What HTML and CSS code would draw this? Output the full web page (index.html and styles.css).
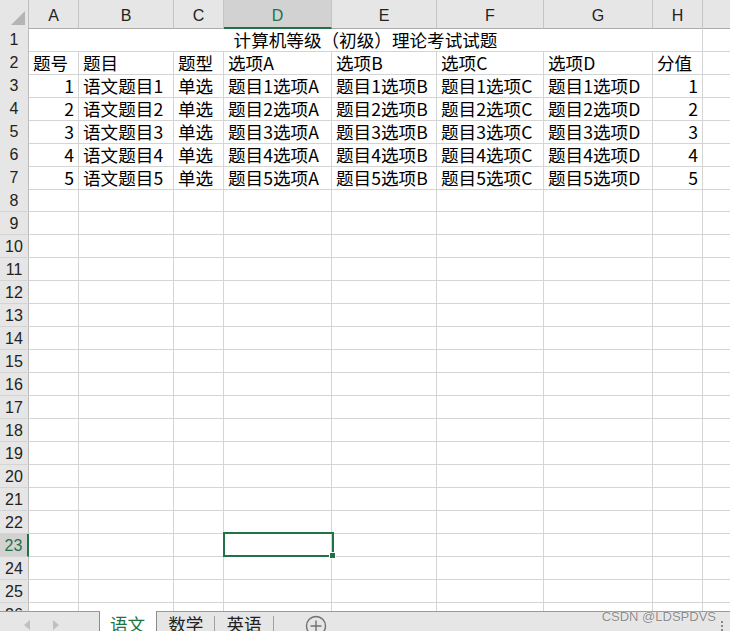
FILE: index.html
```html
<!DOCTYPE html>
<html lang="zh-CN">
<head>
<meta charset="utf-8">
<title>Sheet</title>
<link rel="stylesheet" href="styles.css">
</head>
<body>
<div class="sheet">
  <div class="row hdr">
    <div class="corner"><span class="tri"></span></div>
    <div>A</div><div>B</div><div>C</div><div class="on">D</div><div>E</div><div>F</div><div>G</div><div>H</div><div></div>
  </div>
  <div class="row"><div class="rh">1</div><div class="title">计算机等级（初级）理论考试试题</div><div></div></div>
  <div class="row"><div class="rh">2</div><div>题号</div><div>题目</div><div>题型</div><div>选项A</div><div>选项B</div><div>选项C</div><div>选项D</div><div>分值</div><div></div></div>
  <div class="row"><div class="rh">3</div><div class="num">1</div><div>语文题目1</div><div>单选</div><div>题目1选项A</div><div>题目1选项B</div><div>题目1选项C</div><div>题目1选项D</div><div class="num">1</div><div></div></div>
  <div class="row"><div class="rh">4</div><div class="num">2</div><div>语文题目2</div><div>单选</div><div>题目2选项A</div><div>题目2选项B</div><div>题目2选项C</div><div>题目2选项D</div><div class="num">2</div><div></div></div>
  <div class="row"><div class="rh">5</div><div class="num">3</div><div>语文题目3</div><div>单选</div><div>题目3选项A</div><div>题目3选项B</div><div>题目3选项C</div><div>题目3选项D</div><div class="num">3</div><div></div></div>
  <div class="row"><div class="rh">6</div><div class="num">4</div><div>语文题目4</div><div>单选</div><div>题目4选项A</div><div>题目4选项B</div><div>题目4选项C</div><div>题目4选项D</div><div class="num">4</div><div></div></div>
  <div class="row"><div class="rh">7</div><div class="num">5</div><div>语文题目5</div><div>单选</div><div>题目5选项A</div><div>题目5选项B</div><div>题目5选项C</div><div>题目5选项D</div><div class="num">5</div><div></div></div>
  <div class="row"><div class="rh">8</div><div></div><div></div><div></div><div></div><div></div><div></div><div></div><div></div><div></div></div>
  <div class="row"><div class="rh">9</div><div></div><div></div><div></div><div></div><div></div><div></div><div></div><div></div><div></div></div>
  <div class="row"><div class="rh">10</div><div></div><div></div><div></div><div></div><div></div><div></div><div></div><div></div><div></div></div>
  <div class="row"><div class="rh">11</div><div></div><div></div><div></div><div></div><div></div><div></div><div></div><div></div><div></div></div>
  <div class="row"><div class="rh">12</div><div></div><div></div><div></div><div></div><div></div><div></div><div></div><div></div><div></div></div>
  <div class="row"><div class="rh">13</div><div></div><div></div><div></div><div></div><div></div><div></div><div></div><div></div><div></div></div>
  <div class="row"><div class="rh">14</div><div></div><div></div><div></div><div></div><div></div><div></div><div></div><div></div><div></div></div>
  <div class="row"><div class="rh">15</div><div></div><div></div><div></div><div></div><div></div><div></div><div></div><div></div><div></div></div>
  <div class="row"><div class="rh">16</div><div></div><div></div><div></div><div></div><div></div><div></div><div></div><div></div><div></div></div>
  <div class="row"><div class="rh">17</div><div></div><div></div><div></div><div></div><div></div><div></div><div></div><div></div><div></div></div>
  <div class="row"><div class="rh">18</div><div></div><div></div><div></div><div></div><div></div><div></div><div></div><div></div><div></div></div>
  <div class="row"><div class="rh">19</div><div></div><div></div><div></div><div></div><div></div><div></div><div></div><div></div><div></div></div>
  <div class="row"><div class="rh">20</div><div></div><div></div><div></div><div></div><div></div><div></div><div></div><div></div><div></div></div>
  <div class="row"><div class="rh">21</div><div></div><div></div><div></div><div></div><div></div><div></div><div></div><div></div><div></div></div>
  <div class="row"><div class="rh">22</div><div></div><div></div><div></div><div></div><div></div><div></div><div></div><div></div><div></div></div>
  <div class="row"><div class="rh on">23</div><div></div><div></div><div></div><div class="sel"><span class="selbox"><span class="handle"></span></span></div><div></div><div></div><div></div><div></div><div></div></div>
  <div class="row"><div class="rh">24</div><div></div><div></div><div></div><div></div><div></div><div></div><div></div><div></div><div></div></div>
  <div class="row"><div class="rh">25</div><div></div><div></div><div></div><div></div><div></div><div></div><div></div><div></div><div></div></div>
  <div class="row"><div class="rh">26</div><div></div><div></div><div></div><div></div><div></div><div></div><div></div><div></div><div></div></div>
</div>
<div class="tabs">
  <div class="nav">
    <span class="arrow left"></span>
    <span class="arrow right"></span>
  </div>
  <div class="tab active">语文</div>
  <div class="tab">数学</div>
  <span class="sep"></span>
  <div class="tab">英语</div>
  <span class="sep"></span>
  <div class="add">
    <svg width="22" height="22" viewBox="0 0 22 22"><circle cx="11" cy="11" r="9.5" fill="none" stroke="#707070" stroke-width="1.4"/><path d="M11 5.5v11M5.5 11h11" stroke="#707070" stroke-width="1.4"/></svg>
  </div>
  <div class="mark">CSDN @LDSPDVS</div>
  <div class="dots"><i></i><i></i><i></i></div>
</div>
</body>
</html>
```
FILE: styles.css
```css
* { box-sizing: border-box; }
html, body { margin: 0; padding: 0; background: #fff; overflow: hidden; }
body {
  width: 730px;
  height: 631px;
  position: relative;
  font-family: "Noto Sans CJK SC", "Noto Sans", sans-serif;
  color: #000;
}
.sheet { height: 611px; overflow: hidden; }
.row {
  display: grid;
  grid-template-columns: 29px 50px 95px 50px 108px 105px 107px 109px 50px 50px;
  height: 23px;
}
.row > div {
  border-right: 1px solid #d4d4d4;
  border-bottom: 1px solid #d4d4d4;
  font-size: 17.6px;
  line-height: 22px;
  padding: 1px 4px 0;
  white-space: nowrap;
}
.row > .num { text-align: right; }
.row > .title { grid-column: span 8; text-align: center; }

.row > .rh {
  background: #e6e6e6;
  border-right: 1px solid #bdbdbd;
  font-family: "Liberation Sans", sans-serif;
  font-size: 16px;
  line-height: 20px;
  text-align: center;
  padding: 2px 0 0;
  color: #222;
}
.row > .rh.on {
  background: #d2d2d2;
  border-right: 2px solid #217346;
  color: #217346;
}

.hdr { height: 28px; }
.hdr > div {
  background: #e6e6e6;
  border-right: 1px solid #c4c4c4;
  border-bottom: 1px solid #ababab;
  font-family: "Liberation Sans", sans-serif;
  font-size: 16px;
  line-height: 22px;
  text-align: center;
  color: #222;
  padding: 5px 0 0;
}
.hdr > .on {
  background: #d2d2d2;
  border-bottom: 2px solid #217346;
  color: #217346;
}
.hdr > .corner {
  display: flex;
  align-items: flex-end;
  justify-content: flex-end;
  padding: 0 3px 3px 0;
  border-right: 1px solid #bdbdbd;
}
.tri {
  width: 14px;
  height: 14px;
  background: #b4b4b4;
  clip-path: polygon(100% 0, 100% 100%, 0 100%);
}

.row > .sel { position: relative; z-index: 2; }
.selbox {
  position: absolute;
  top: -2px;
  left: -1px;
  width: 111px;
  height: 25px;
  border: 2px solid #217346;
}
.handle {
  position: absolute;
  right: -4px;
  bottom: -4px;
  width: 7px;
  height: 7px;
  background: #217346;
  border: 1px solid #fff;
}

.tabs {
  position: relative;
  display: flex;
  height: 20px;
  background: #e6e6e6;
  border-top: 1px solid #9a9a9a;
  font-size: 17.6px;
  line-height: 22px;
  color: #222;
}
.nav {
  width: 100px;
  height: 30px;
  border-right: 1px solid #8c8c8c;
  position: relative;
}
.arrow {
  position: absolute;
  top: 8px;
  width: 0;
  height: 0;
  border-top: 5px solid transparent;
  border-bottom: 5px solid transparent;
}
.arrow.left { left: 24px; border-right: 6px solid #c0c0c0; }
.arrow.right { left: 53px; border-left: 6px solid #c0c0c0; }
.tab { padding: 1px 11px 0; height: 30px; }
.tab.active {
  background: #fff;
  color: #217346;
  margin-top: -1px;
  padding: 2px 11px 0 10px;
  border-right: 1px solid #8c8c8c;
  height: 31px;
}
.sep {
  width: 1px;
  height: 16px;
  margin-top: 4px;
  background: #a0a0a0;
}
.add { margin-left: 31px; padding-top: 3px; }
.add svg { display: block; }
.mark {
  position: absolute;
  right: 14px;
  top: -2px;
  font-family: "Liberation Sans", sans-serif;
  font-size: 13px;
  line-height: 14px;
  color: #8a8a8a;
  text-shadow: 0 0 1px #fff, 0 0 1px #fff;
}
.dots {
  position: absolute;
  right: 7px;
  top: 9px;
  display: flex;
  flex-direction: column;
  gap: 2px;
}
.dots i { display: block; width: 2px; height: 2px; background: #8a8a8a; }
```
